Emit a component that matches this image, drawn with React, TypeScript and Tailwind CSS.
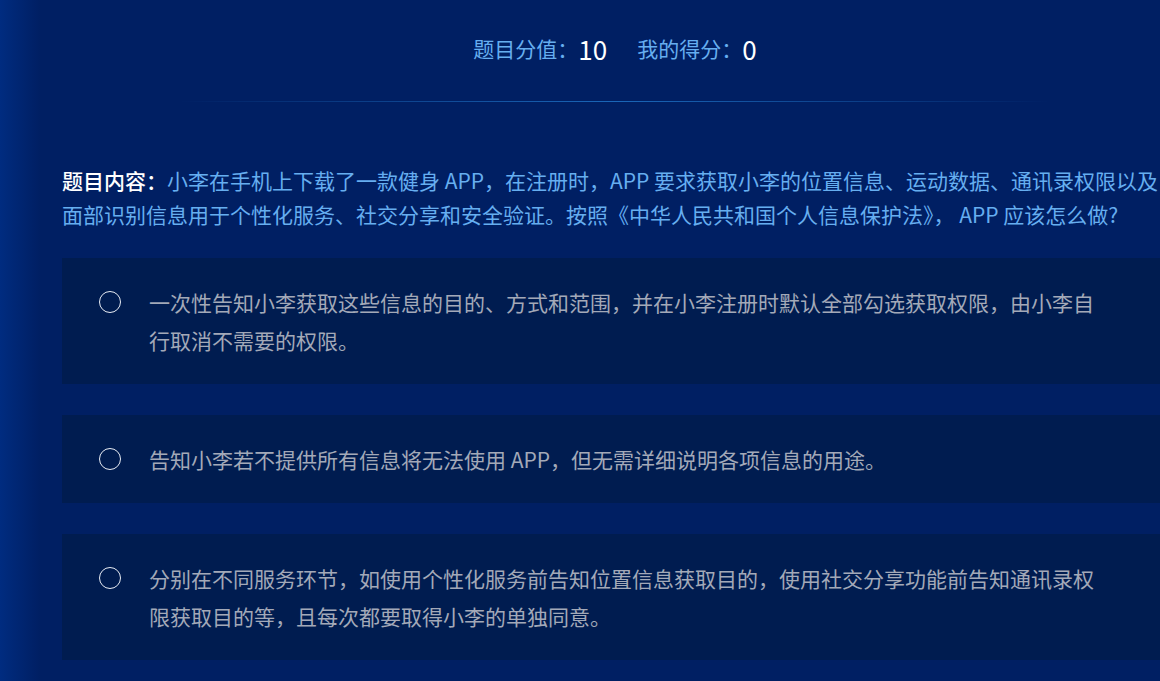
import React from 'react';

const options = [
  '一次性告知小李获取这些信息的目的、方式和范围，并在小李注册时默认全部勾选获取权限，由小李自行取消不需要的权限。',
  '告知小李若不提供所有信息将无法使用 APP，但无需详细说明各项信息的用途。',
  '分别在不同服务环节，如使用个性化服务前告知位置信息获取目的，使用社交分享功能前告知通讯录权限获取目的等，且每次都要取得小李的单独同意。',
];

export default function App() {
  return (
    <div
      className="w-[1160px] h-[681px] overflow-hidden flex bg-[#001f63]"
      style={{ fontFamily: '"Noto Sans CJK SC", "Noto Sans", sans-serif' }}
    >
      {/* left glow strip */}
      <div className="w-10 shrink-0 bg-linear-to-r from-[#002c80] to-[#001f63]"></div>

      <div className="w-[1150px] shrink-0 pl-[22px] pr-[10px]">
        {/* score header */}
        <div className="w-[1106px] h-[101px] pb-1 flex items-center justify-center gap-[30px]">
          <div className="flex items-center">
            <span className="text-[21px] text-[#66aef0]">题目分值：</span>
            <span className="text-[26px] text-white leading-none">10</span>
          </div>
          <div className="flex items-center">
            <span className="text-[21px] text-[#66aef0]">我的得分：</span>
            <span className="text-[26px] text-white leading-none">0</span>
          </div>
        </div>
        <div className="w-[1106px] flex justify-center">
          <div className="w-[870px] h-px bg-linear-to-r from-transparent via-[#1a66b8] to-transparent"></div>
        </div>

        {/* question */}
        <p className="mt-[61px] w-[1110px] text-[21px] leading-[34px] text-[#66aef0]">
          <span className="text-white font-medium">题目内容：</span>
          小李在手机上下载了一款健身 APP，在注册时，APP 要求获取小李的位置信息、运动数据、通讯录权限以及面部识别信息用于个性化服务、社交分享和安全验证。按照《中华人民共和国个人信息保护法》， APP 应该怎么做?
        </p>

        {/* options */}
        <div className="mt-[27px] flex flex-col gap-[31px]">
          {options.map((text, i) => (
            <div key={i} className="bg-[#001c50] py-[25px] pl-[37px] flex items-start gap-[28px]">
              <div className="h-[38px] flex items-center shrink-0">
                <div className="w-[22px] h-[22px] rounded-full border-[1.5px] border-[#e8ecf4]"></div>
              </div>
              <div className="w-[955px] text-[21px] leading-[38px] text-[#a3a9b8]">{text}</div>
            </div>
          ))}
        </div>
      </div>
    </div>
  );
}
